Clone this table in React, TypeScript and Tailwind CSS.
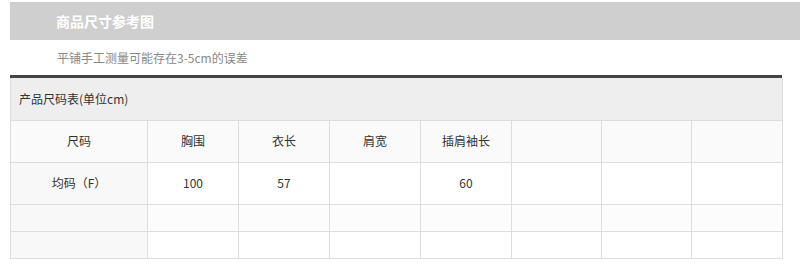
const cols = [137, 91, 91, 91, 91, 90, 90, 91];

const headers = ['尺码', '胸围', '衣长', '肩宽', '插肩袖长', '', '', ''];
const rows = [
  { cells: ['均码（F）', '100', '57', '', '60', '', '', ''], h: 'h-[42px]', bg: 'bg-white' },
  { cells: ['', '', '', '', '', '', '', ''], h: 'h-[27px]', bg: 'bg-[#fcfcfc]' },
  { cells: ['', '', '', '', '', '', '', ''], h: 'h-[27px]', bg: 'bg-white' },
];

export default function App() {
  return (
    <div className="h-[277px] w-[807px] overflow-hidden bg-white pt-[2px] text-[12px] text-[#333]" style={{ fontFamily: '"Noto Sans CJK SC", "Noto Sans", sans-serif' }}>
      <div className="ml-[10px] flex h-[38px] w-[790px] items-center bg-[#cfcfcf] pl-[46px]">
        <span className="text-[14px] font-bold leading-none text-white">商品尺寸参考图</span>
      </div>
      <div className="ml-[10px] flex h-[35px] items-center pl-[47px] text-[12px] text-[#888]">平铺手工测量可能存在3-5cm的误差</div>
      <div className="ml-[10px] w-[772px] border-t-[3px] border-[#444]">
        <table className="w-[772px] table-fixed border-collapse">
          <colgroup>
            {cols.map((w, i) => (
              <col key={i} style={{ width: w }} />
            ))}
          </colgroup>
          <tbody>
            <tr className="h-[42px] bg-[#eeeeee]">
              <td colSpan={8} className="border-x border-b border-[#dddddd] pl-[8px] text-left">产品尺码表(单位cm)</td>
            </tr>
            <tr className="h-[42px] bg-[#fafafa]">
              {headers.map((t, i) => (
                <td key={i} className="border border-[#dddddd] text-center">{t}</td>
              ))}
            </tr>
            {rows.map((r, ri) => (
              <tr key={ri} className={`${r.h} ${r.bg}`}>
                {r.cells.map((t, i) => (
                  <td key={i} className={`border border-[#dddddd] text-center ${i === 0 ? 'bg-[#f8f8f8]' : ''}`}>{t}</td>
                ))}
              </tr>
            ))}
          </tbody>
        </table>
      </div>
    </div>
  );
}
